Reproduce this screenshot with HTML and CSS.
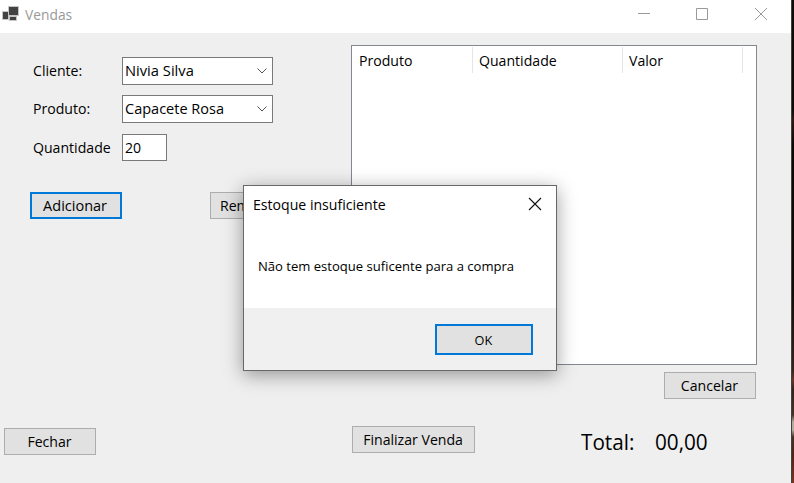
FILE: index.html
```html
<!DOCTYPE html>
<html lang="pt-BR">
<head>
<meta charset="utf-8">
<title>Vendas</title>
<link rel="stylesheet" href="styles.css">
</head>
<body>
<div class="screen">
  <main class="window">
    <header class="titlebar">
      <svg class="app-icon" width="18" height="16" viewBox="0 0 18 16"><g fill="#424242" stroke="#c5c5c5"><path d="M6.500 .5h10v9h-10zM.5 5.500h6v8h-6zM7.500 10.500h7v4h-7z"/></g></svg>
      <span class="title">Vendas</span>
      <svg class="controls" width="132" height="14" viewBox="0 0 132 14" fill="none" stroke="#999"><path d="M0 6.500h12M58.500 1.500h11v11h-11z"/><path d="M117 1l12 12M129 1l-12 12"/></svg>
    </header>
    <div class="content">
      <section class="left">
        <div class="row"><span class="label">Cliente:</span><div class="field combo"><span class="wide">Nivia Silva</span><svg width="10" height="6" viewBox="0 0 10 6"><path d="M.5.5L5 5 9.500.5" fill="none" stroke="#555"/></svg></div></div>
        <div class="row"><span class="label">Produto:</span><div class="field combo"><span class="medium">Capacete Rosa</span><svg width="10" height="6" viewBox="0 0 10 6"><path d="M.5.5L5 5 9.500.5" fill="none" stroke="#555"/></svg></div></div>
        <div class="row last"><span class="label">Quantidade</span><div class="field amount"><span>20</span></div></div>
        <div class="actions"><div class="button primary"><span class="medium">Adicionar</span></div><div class="button remove"><span>Remover</span></div></div>
        <div class="button close-button"><span>Fechar</span></div>
      </section>
      <section class="right">
        <div class="list">
          <div class="column first"><span>Produto</span></div>
          <div class="column"><span>Quantidade</span></div>
          <div class="column third"><span>Valor</span></div>
        </div>
        <div class="button cancel"><span>Cancelar</span></div>
        <div class="summary">
          <div class="button finish"><span>Finalizar Venda</span></div>
          <span class="total total-label">Total:</span><span class="total">00,00</span>
        </div>
      </section>
    </div>
  </main>
  <div class="desktop"></div>
  <div class="dialog">
    <div class="dialog-title"><span>Estoque insuficiente</span><svg width="14" height="14" viewBox="0 0 14 14"><path d="M1 1l12 12M13 1L1 13" stroke="#111" stroke-width="1.100"/></svg></div>
    <div class="message"><span class="medium">Não tem estoque suficente para a compra</span></div>
    <footer class="dialog-footer"><div class="button primary ok"><span>OK</span></div></footer>
  </div>
</div>
</body>
</html>
```
FILE: styles.css
```css
* { box-sizing: border-box; }
body { margin: 0; font: 15px/20px "Open Sans", "Noto Sans", sans-serif; color: #000; }
span { display: inline-block; white-space: nowrap; transform: scaleX(.94); transform-origin: left center; }
svg { display: block; flex: none; }
.screen { position: relative; display: flex; width: 794px; height: 483px; overflow: hidden; }
.window { width: 791px; background: #efefef; }
.desktop { width: 3px; border-left: 1px solid #44403e; background: linear-gradient(#100b09 0, #100b09 110px, #321711 120px, #0d0706 145px, #120b08 290px, #38231c 370px, #6b3526 380px, #35221b 390px, #493126 415px, #b5ab9b 422px, #b5ab9b 430px, #4b2f24 437px, #512315 455px, #7a3520 483px); }
.titlebar { height: 33px; background: #fff; display: flex; padding-left: 2px; }
.app-icon { margin-top: 6px; }
.title { color: #999; margin: 4px 0 0 5px; height: 20px; transform: scaleX(.92); }
.controls { margin: 7px 21px 0 auto; }
.content { display: flex; height: 450px; }
.left { width: 351px; padding-top: 24px; }
.row { display: flex; align-items: center; height: 28px; margin-bottom: 10px; padding-left: 33px; }
.row.last { height: 27px; margin: 11px 0 0; }
.label { width: 89px; padding-bottom: 2px; }
.field { height: 28px; border: 1px solid #7a7a7a; background: #fff; display: flex; align-items: center; padding-left: 2px; }
.field span { padding-bottom: 2px; }
.combo { width: 151px; justify-content: space-between; padding-right: 5px; }
.amount { width: 45px; height: 27px; }
.actions { display: flex; gap: 88px; padding-left: 30px; margin-top: 31px; }
.button { width: 92px; height: 27px; background: #e1e1e1; border: 1px solid #adadad; display: flex; align-items: center; justify-content: center; flex: none; padding-bottom: 2px; }
.button span { transform-origin: center; position: relative; left: -1px; }
.primary { border: 2px solid #0078d7; }
.remove { justify-content: flex-start; padding-left: 10px; }
.button.remove span { transform-origin: left center; }
.medium { transform: scaleX(.967); }
.wide { transform: scaleX(.98); }
.close-button { margin: 209px 0 0 4px; }
.close-button span { left: 0; }
.right { width: 406px; padding-top: 12px; }
.list { display: flex; height: 320px; background: #fff; border: 1px solid #828790; padding-top: 1px; }
.column { height: 26px; width: 150px; border-right: 1px solid #e5e5e5; padding: 3px 0 0 6px; }
.column.first { width: 121px; padding-left: 7px; }
.column.third { width: 120px; }
.cancel { margin: 7px 0 0 313px; }
.summary { display: flex; margin: 27px 0 0 1px; }
.finish { width: 123px; }
.finish span { left: 0; }
.total { font-size: 22px; line-height: 30px; }
.total-label { margin-left: 106px; width: 74px; }
.dialog { position: absolute; left: 243px; top: 185px; width: 314px; height: 186px; border: 1px solid #686868; background: #fff; box-shadow: 0 4px 18px rgba(0,0,0,.38); }
.dialog-title { display: flex; justify-content: space-between; height: 38px; padding: 8px 14px 0 9px; }
.dialog-title svg { margin-top: 3px; }
.message { height: 84px; padding: 32px 0 0 14px; font-size: 13.500px; }
.dialog-footer { background: #f0f0f0; height: 62px; padding: 16px 0 0 191px; }
.ok { width: 98px; height: 31px; font-size: 13.500px; padding-bottom: 0; }
```
